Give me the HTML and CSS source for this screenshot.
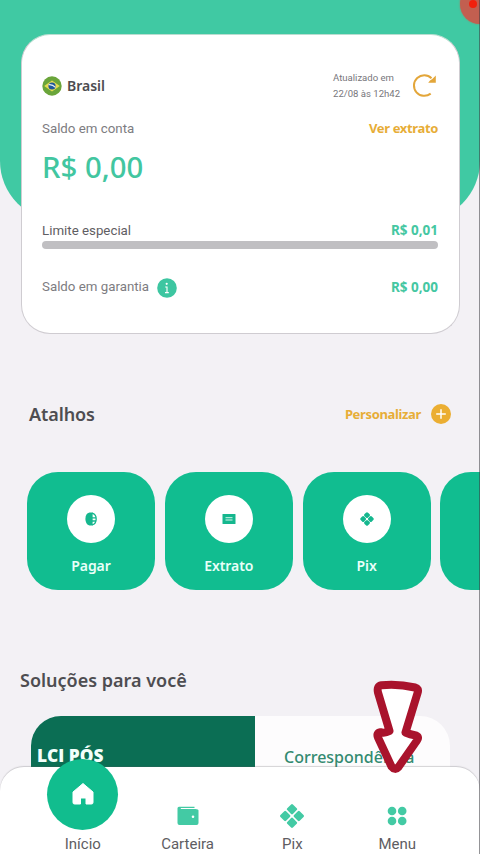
FILE: index.html
```html
<!DOCTYPE html>
<html lang="pt-BR">
<head>
<meta charset="utf-8">
<title>Conta</title>
<link rel="stylesheet" href="styles.css">
</head>
<body>
<div class="app">
  <div class="hero"></div>
  <div class="rec"><span class="rec-dot"></span></div>

  <main class="page">
    <section class="card">
      <div class="row head">
        <div class="country">
          <svg class="flag" width="20" height="20" viewBox="0 0 20 20"><circle cx="10" cy="10" r="9.7" fill="#6aa53a"/><path d="M10 4.5 17.8 10 10 15.5 2.2 10Z" fill="#e6dc50"/><circle cx="10" cy="10" r="3.6" fill="#20579a"/><path d="M6.6 8.7Q10.5 8.2 13.5 11.4" fill="none" stroke="#e8f0f2" stroke-width="1.1"/></svg>
          <span class="country-name">Brasil</span>
        </div>
        <div class="updated">
          <p class="stamp">Atualizado em<br>22/08 às 12h42</p>
          <svg class="refresh" width="26" height="24" viewBox="0 0 26 24"><path d="M19.5 4.2A10.3 10.3 0 1 0 18.7 19.6" fill="none" stroke="#e3a63a" stroke-width="2"/><path d="M23.8 1.6V8.8H16.2L18 6.4 20.3 5.1Z" fill="#e3a63a"/></svg>
        </div>
      </div>
      <div class="row balance"><span class="label">Saldo em conta</span><a class="link">Ver extrato</a></div>
      <div class="amount">R$ 0,00</div>
      <div class="row limit"><span class="label dark">Limite especial</span><b class="value">R$ 0,01</b></div>
      <div class="bar"></div>
      <div class="row escrow">
        <span class="label with-info">Saldo em garantia
          <svg width="20" height="20" viewBox="0 0 20 20"><circle cx="10" cy="10" r="9.8" fill="#3dc6a1"/><circle cx="9.7" cy="5.8" r="1.1" fill="#fff"/><path d="M8.2 9h1.8v5.2M8 14.6h3.8" fill="none" stroke="#fff" stroke-width="1.1"/></svg>
        </span>
        <b class="value">R$ 0,00</b>
      </div>
    </section>

    <div class="row shortcuts-head">
      <h2 class="title shortcuts-title">Atalhos</h2>
      <a class="customize"><span class="link">Personalizar</span>
        <svg width="20" height="20" viewBox="0 0 20 20"><circle cx="10" cy="10" r="10" fill="#ebae32"/><path d="M10 5.2v9.6M5.2 10h9.6" stroke="#fff" stroke-width="1.5"/></svg>
      </a>
    </div>

    <div class="tiles">
      <div class="tile"><span class="disc"><svg width="14" height="14" viewBox="0 0 14 14"><path d="M5.5.6H8.6V13.400H5.5Q1.4 12.5 1.4 7T5.5.6Z" fill="#15b78e"/><path d="M8 1.1Q12.2 2 12.2 7T8 12.9" fill="none" stroke="#15b78e" stroke-width="1.3"/><path d="M8 5.8h4M8 9h4" stroke="#15b78e" stroke-width="1.3"/></svg></span><span class="tile-label">Pagar</span></div>
      <div class="tile"><span class="disc"><svg width="14" height="12" viewBox="0 0 14 12"><rect x=".5" y="1" width="13" height="10" rx=".6" fill="#15b78e"/><path d="M3.5 4.7h7M3.5 7h7" stroke="#d6f5ec" stroke-width="1"/></svg></span><span class="tile-label">Extrato</span></div>
      <div class="tile"><span class="disc"><svg width="14" height="14" viewBox="0 0 24 24"><g fill="#15b78e"><rect x="7.8" y="1.2" width="8.4" height="8.4" rx="2.5" transform="rotate(45 12 5.4)"/><rect x="7.8" y="14.4" width="8.4" height="8.4" rx="2.5" transform="rotate(45 12 18.6)"/><rect x="1.2" y="7.8" width="8.4" height="8.4" rx="2.5" transform="rotate(45 5.4 12)"/><rect x="14.4" y="7.8" width="8.4" height="8.4" rx="2.5" transform="rotate(45 18.6 12)"/></g></svg></span><span class="tile-label">Pix</span></div>
      <div class="tile"></div>
    </div>

    <h2 class="title solutions">Soluções para você</h2>
    <div class="banner">
      <div class="banner-left">LCI PÓS</div>
      <div class="banner-right">Correspondência</div>
    </div>
  </main>

  <nav class="nav">
    <a class="item home"><span class="bubble"><svg width="24" height="24" viewBox="0 0 24 24"><path d="M12 1.500 22 10V20.500Q22 22 20.500 22H15V16H9.500V22H3.500Q2 22 2 20.500V10Z" fill="#fff" stroke="#fff" stroke-width="1" stroke-linejoin="round"/></svg></span><span class="nav-label">Início</span></a>
    <a class="item"><span class="icon"><svg width="24" height="24" viewBox="0 0 24 24"><path d="M3 2.800H18.500V4H4.800V4.900H19.500Q22.500 4.900 22.500 6.500V19Q22.500 21 20.500 21H3.500Q1.500 21 1.500 19V4.300Q1.500 2.800 3 2.800Z" fill="#43caa4"/><circle cx="17" cy="12.800" r="1.300" fill="#fff"/></svg></span><span class="nav-label">Carteira</span></a>
    <a class="item"><span class="icon"><svg width="24" height="24" viewBox="0 0 24 24"><g fill="#43caa4"><rect x="8" y="1.200" width="8" height="8" rx="1.300" transform="rotate(45 12 5.200)"/><rect x="8" y="14.800" width="8" height="8" rx="1.300" transform="rotate(45 12 18.800)"/><rect x="1.200" y="8" width="8" height="8" rx="1.300" transform="rotate(45 5.200 12)"/><rect x="14.800" y="8" width="8" height="8" rx="1.300" transform="rotate(45 18.800 12)"/></g></svg></span><span class="nav-label">Pix</span></a>
    <a class="item"><span class="icon"><svg width="24" height="24" viewBox="0 0 24 24"><g fill="#43caa4"><circle cx="7" cy="7" r="4.300"/><circle cx="17.200" cy="7" r="4.300"/><circle cx="7" cy="17" r="4.300"/><circle cx="17.200" cy="17" r="4.300"/></g></svg></span><span class="nav-label">Menu</span></a>
  </nav>

  <svg class="pointer" width="56" height="100" viewBox="0 0 56 100"><path d="M11.500 8.200Q28 6.500 45 10.500Q49 11.500 47.700 15.500L35.500 55.500Q40 57.500 46 58.500Q49.500 60 47 63.500L28.500 90Q25 94 21.500 89.500L8 60.500Q6 56 10.500 55.200Q15 56.500 19.500 54L8 15.500Q6.500 9 11.500 8.200Z" fill="#fff" stroke="#a9132c" stroke-width="8" stroke-linejoin="round"/></svg>
  <div class="edge"></div>
</div>
</body>
</html>
```
FILE: styles.css
```css
* { box-sizing: border-box; }
body { margin: 0; background: #f3f1f5; font-family: "Roboto", "Liberation Sans", sans-serif; }
p, h2 { margin: 0; }
svg { display: block; flex: none; }
.app { position: relative; width: 480px; height: 854px; overflow: hidden; background: #f3f1f5; }
.hero { position: absolute; inset: 0 0 auto; height: 221px; background: #40c9a3; border-radius: 0 0 60px 60px; }
.rec { position: absolute; left: 460px; top: -16px; width: 40px; height: 40px; border-radius: 50%; background: #c25f50; box-shadow: 0 0 2px #a97862; }
.rec-dot { position: absolute; left: 9px; top: 16px; width: 8px; height: 8px; border-radius: 50%; background: #f1200c; }
.edge { position: absolute; right: 0; top: 0; width: 1px; height: 100%; background: rgba(60, 60, 65, .55); }
.page { position: relative; padding: 34px 0 0; white-space: nowrap; }
.row { display: flex; justify-content: space-between; align-items: center; }

.card { width: 439px; height: 300px; margin-left: 20.5px; padding: 35px 20.5px 0; background: #fff; border: 1.5px solid #cfccd1; border-top-color: #b9ddd0; border-radius: 29px; }
.head { height: 32px; }
.country { display: flex; align-items: center; gap: 5px; }
.country-name { font: 600 14px/20px "Noto Sans", sans-serif; color: #4d4c50; }
.updated { display: flex; align-items: center; gap: 12px; }
.stamp { font-size: 9.55px; line-height: 16px; color: #77767b; }
.balance { height: 20px; margin-top: 16px; }
.label { padding-top: 1px; font-size: 13.3px; line-height: 20px; color: #7d7c81; }
.label.dark { color: #5f5e63; }
.link { font: 700 13px/20px "Noto Sans", sans-serif; letter-spacing: -.35px; color: #e7ad37; }
.amount { margin-top: 10px; font: 500 29.3px/38px "Noto Sans", sans-serif; color: #42c6a0; }
.limit { height: 20px; margin-top: 34px; }
.value { font: 700 13.5px/20px "Noto Sans", sans-serif; color: #45c7a2; }
.bar { height: 8px; margin-top: 1px; border-radius: 4px; background: #c0bfc2; }
.escrow { height: 20px; margin-top: 28px; }
.with-info { display: flex; align-items: center; gap: 7.5px; padding-top: 0; }
.with-info svg { margin-top: 2px; }

.shortcuts-head { height: 24px; margin-top: 68px; padding: 0 29px; }
.title { font: 600 18px/24px "Noto Sans", sans-serif; color: #4e4d51; }
.shortcuts-title { letter-spacing: -.1px; }
.customize { display: flex; align-items: center; gap: 10px; }
.tiles { display: flex; gap: 9.8px; margin-top: 46px; padding-left: 27px; }
.tile { flex: none; width: 128px; height: 118px; padding-top: 22.5px; display: flex; flex-direction: column; align-items: center; border-radius: 31px; background: #11bd90; }
.disc { display: grid; place-items: center; width: 48px; height: 48px; border-radius: 50%; background: #fff; }
.tile-label { margin-top: 13.5px; font: 600 14px/20px "Noto Sans", sans-serif; letter-spacing: -.1px; color: #e9fff8; }
.solutions { margin: 78px 0 0 20px; }
.banner { display: flex; width: 419px; height: 100px; margin: 24px 0 0 31px; border-radius: 30px; overflow: hidden; background: #fdfcfd; }
.banner-left { width: 224px; padding: 26px 0 0 6px; background: #0b6e54; color: #f3fffb; font: 800 17.3px/28px "Open Sans", sans-serif; }
.banner-right { padding: 29px 0 0 29px; font: 500 16px/24px "Noto Sans", sans-serif; color: #338a70; }

.nav { position: absolute; left: 0; right: 0; bottom: 0; height: 87px; display: flex; padding: 0 30.4px; background: #fff; border-radius: 24px 24px 0 0; box-shadow: 0 -1px 1px rgba(90, 90, 95, .25); }
.item { width: 104.8px; height: 88px; display: flex; flex-direction: column; align-items: center; }
.bubble { display: grid; place-items: center; flex: none; width: 71px; height: 71px; margin-top: -8.5px; border-radius: 50%; background: #11bd8e; }
.icon { margin-top: 37px; height: 25.5px; }
.nav-label { margin-top: 5px; font-size: 15px; line-height: 18px; color: #5e5d62; }
.pointer { position: absolute; left: 370px; top: 677px; }
```
